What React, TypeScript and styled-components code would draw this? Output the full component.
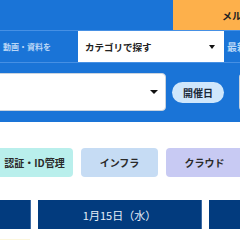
import React from "react";
import styled, { createGlobalStyle } from "styled-components";

const GlobalStyle = createGlobalStyle`
  html, body {
    margin: 0;
    padding: 0;
    background: #ffffff;
    font-family: "Noto Sans CJK JP", "Noto Sans", sans-serif;
  }
  * { box-sizing: border-box; }
`;

const Page = styled.div`
  width: 240px;
  height: 240px;
  overflow: hidden;
  background: #ffffff;
`;

const Header = styled.header`
  background: #1a74d7;
  padding-bottom: 11px;
`;

const TopBar = styled.div`
  height: 30px;
  display: flex;
`;

const Spacer = styled.div`
  width: 173px;
  flex-shrink: 0;
`;

const MailTab = styled.div`
  flex: 1;
  background: #fdb04b;
  color: #222;
  font-size: 10px;
  font-weight: 700;
  display: flex;
  align-items: center;
  padding-left: 49px;
  white-space: nowrap;
  overflow: hidden;
`;

const SearchRow = styled.div`
  height: 33px;
  display: flex;
  align-items: stretch;
  border-top: 1px solid #4690e4;
  border-bottom: 1px solid #4690e4;
`;

const RowLabel = styled.div<{ $width: number; $pad?: number; $size?: number }>`
  width: ${p => p.$width}px;
  flex-shrink: 0;
  color: #b9d6f6;
  font-size: ${p => p.$size ?? 8}px;
  font-weight: 700;
  display: flex;
  align-items: center;
  padding-left: ${p => p.$pad ?? 0}px;
  white-space: nowrap;
  overflow: hidden;
`;

const Select = styled.div`
  width: 146px;
  flex-shrink: 0;
  background: #ffffff;
  display: flex;
  align-items: center;
  justify-content: space-between;
  padding: 0 9px 0 7px;
  color: #222;
  font-size: 9.5px;
  font-weight: 700;
`;

const Caret = styled.span<{ $size?: number }>`
  width: 0;
  height: 0;
  border-left: ${p => p.$size ?? 3.5}px solid transparent;
  border-right: ${p => p.$size ?? 3.5}px solid transparent;
  border-top: ${p => (p.$size ?? 3.5) + 0.5}px solid #111;
`;

const FilterRow = styled.div`
  display: flex;
  align-items: center;
  margin-top: 10px;
  height: 38px;
`;

const KeywordBox = styled.div`
  width: 170px;
  height: 38px;
  margin-left: -4px;
  flex-shrink: 0;
  background: #ffffff;
  border: 1px solid #c9d3de;
  border-radius: 4px;
  display: flex;
  align-items: center;
  justify-content: flex-end;
  padding-right: 7px;
`;

const DatePill = styled.div`
  margin-left: 6px;
  height: 21px;
  padding: 0 11px;
  border-radius: 11px;
  background: #cfe7fc;
  color: #1b2a3a;
  font-size: 10px;
  font-weight: 700;
  display: flex;
  align-items: center;
  flex-shrink: 0;
`;

const DateInput = styled.div`
  margin-left: 15px;
  height: 38px;
  width: 60px;
  flex-shrink: 0;
  background: #ffffff;
  border: 1px solid #c9d3de;
  border-radius: 4px;
  color: #b5b5b5;
  font-size: 9px;
  display: flex;
  align-items: center;
  padding-left: 3px;
  white-space: nowrap;
`;

const TagRow = styled.div`
  display: flex;
  gap: 8px;
  margin-top: 26px;
  margin-left: -4px;
`;

const Tag = styled.div<{ $bg: string }>`
  width: 77px;
  height: 29px;
  flex-shrink: 0;
  border-radius: 4px;
  background: ${p => p.$bg};
  color: #2a2a2a;
  font-size: 10px;
  font-weight: 700;
  display: flex;
  align-items: center;
  justify-content: center;
  white-space: nowrap;
`;

const DayTabs = styled.div`
  display: flex;
  gap: 7px;
  margin-top: 23px;
  margin-left: -133px;
`;

const DayTab = styled.div`
  width: 164px;
  height: 29px;
  flex-shrink: 0;
  background: #023b7e;
  border-right: 1px solid #3d6aa3;
  color: #e6eef8;
  font-size: 11px;
  display: flex;
  align-items: center;
  justify-content: center;
  white-space: nowrap;
`;

const Notice = styled.div`
  margin-top: 10px;
  width: 30px;
  height: 2px;
  background: #fdf7dc;
`;

const tags = [
  { label: "認証・ID管理", bg: "#b9efec" },
  { label: "インフラ", bg: "#c6dcf4" },
  { label: "クラウド", bg: "#c8caf3" },
];

const days = ["1月14日（火）", "1月15日（水）", "1月16日（木）"];

export default function App() {
  return (
    <Page>
      <GlobalStyle />
      <Header>
        <TopBar>
          <Spacer />
          <MailTab>メルマガ登録</MailTab>
        </TopBar>
        <SearchRow>
          <RowLabel $width={78} $pad={3}>動画・資料を</RowLabel>
          <Select>
            <span>カテゴリで探す</span>
            <Caret />
          </Select>
          <RowLabel $width={16} $pad={3} $size={10}>最新</RowLabel>
        </SearchRow>
        <FilterRow>
          <KeywordBox>
            <Caret $size={4} />
          </KeywordBox>
          <DatePill>開催日</DatePill>
          <DateInput>選択</DateInput>
        </FilterRow>
      </Header>
      <TagRow>
        {tags.map(t => (
          <Tag key={t.label} $bg={t.bg}>{t.label}</Tag>
        ))}
      </TagRow>
      <DayTabs>
        {days.map(d => (
          <DayTab key={d}>{d}</DayTab>
        ))}
      </DayTabs>
      <Notice />
    </Page>
  );
}
